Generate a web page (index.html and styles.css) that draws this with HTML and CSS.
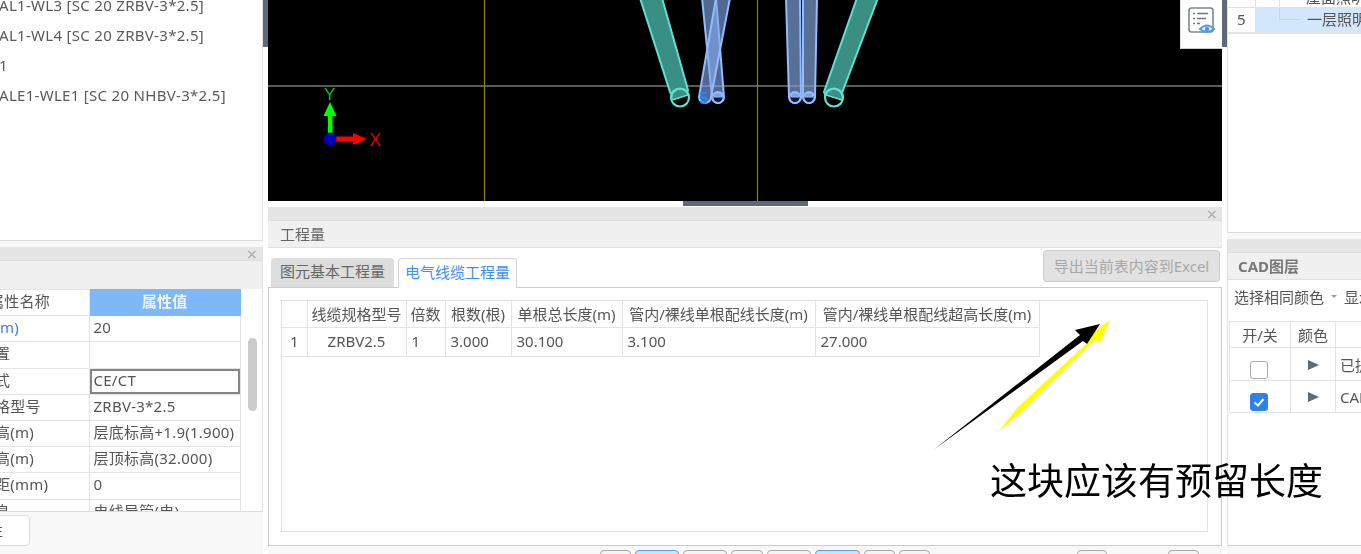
FILE: index.html
```html
<!DOCTYPE html>
<html lang="zh">
<head>
<meta charset="utf-8">
<title>工程量</title>
<link rel="stylesheet" href="styles.css">
</head>
<body>
<div class="app">
  <section class="col col-left">
    <div class="tree">
      <div class="tree-row">AL1-WL3 [SC 20 ZRBV-3*2.5]</div>
      <div class="tree-row">AL1-WL4 [SC 20 ZRBV-3*2.5]</div>
      <div class="tree-row">1</div>
      <div class="tree-row">ALE1-WLE1 [SC 20 NHBV-3*2.5]</div>
    </div>
    <div class="props">
      <div class="strip"><span class="close">×</span></div>
      <div class="title-bar"></div>
      <div class="props-body">
        <table class="grid props-table">
          <colgroup><col class="c-name"><col class="c-value"></colgroup>
          <tr class="props-head"><th class="name-head">属性名称</th><th class="value-head">属性值</th></tr>
          <tr><td class="name flush link">m)</td><td>20</td></tr>
          <tr><td class="name">置</td><td></td></tr>
          <tr><td class="name">式</td><td class="focus">CE/CT</td></tr>
          <tr><td class="name">格型号</td><td>ZRBV-3*2.5</td></tr>
          <tr><td class="name">高(m)</td><td>层底标高+1.9(1.900)</td></tr>
          <tr><td class="name">高(m)</td><td>层顶标高(32.000)</td></tr>
          <tr><td class="name">距(mm)</td><td>0</td></tr>
          <tr><td class="name">息</td><td>电线导管(电)</td></tr>
        </table>
        <div class="vscroll"><div class="vthumb"></div></div>
      </div>
    </div>
    <div class="left-foot"><div class="foot-btn">性</div></div>
  </section>

  <div class="sash"><div class="sash-thumb"></div></div>

  <section class="col col-center">
    <div class="viewer">
      <svg class="scene" viewBox="0 0 954 201" width="954" height="201" aria-hidden="true">
        <g transform="translate(-268 0)">
          <line x1="268" y1="86" x2="1222" y2="86" class="axis-h"/>
          <line x1="484.5" y1="0" x2="484.5" y2="201" class="axis-v"/>
          <line x1="757.5" y1="0" x2="757.5" y2="201" class="axis-v"/>
          <path class="teal" d="M640 -2 L670 92 A9.5 9.5 0 0 0 688 90 L662 -2 Z"/>
          <circle class="teal-end" cx="680" cy="97.5" r="9"/>
          <path class="teal-cap" d="M672 100 A8 8 0 0 1 688 95 Z"/>
          <path class="teal" d="M857 -2 L824 92 A9.5 9.5 0 0 0 842 93 L878 -2 Z"/>
          <circle class="teal-end" cx="834" cy="97.5" r="9"/>
          <path class="teal-cap" d="M826 95 A8 8 0 0 1 842 100 Z"/>
          <path class="blue" d="M702 -2 L712 97 A6 6 0 0 0 724 97 L716 -2 Z"/>
          <path class="blue" d="M716 -2 L699 97 A6 6 0 0 0 711 97 L730 -2 Z"/>
          <path class="blue dark" d="M786 -2 L789 97 A6 6 0 0 0 801 97 L800 -2 Z"/>
          <path class="blue dark" d="M803 -2 L803 97 A6 6 0 0 0 815 97 L817 -2 Z"/>
          <circle class="blue-end" cx="718" cy="97.5" r="5.5"/>
          <circle class="blue-end" cx="795" cy="97.5" r="5.5"/>
          <circle class="blue-end" cx="809" cy="97.5" r="5.5"/>
          <path class="blue-cap" d="M714 97 A4 4 0 0 1 722 97 Z M791 97 A4 4 0 0 1 799 97 Z M805 97 A4 4 0 0 1 813 97 Z"/>
          <text x="699" y="104" class="pipe-label">5</text>
          <path class="y-axis" d="M328 135 V116 H323.5 L330 102 L336.5 116 H332.5 V135 Z"/>
          <path class="x-axis" d="M336 136.5 H353 V133 L367 139 L353 145 V141.5 H336 Z"/>
          <circle class="origin" cx="330" cy="139" r="6.5"/>
          <text x="324" y="100" class="y-label">Y</text>
          <text x="369.5" y="146" class="x-label">X</text>
        </g>
      </svg>
      <div class="float-tool">
        <svg width="28" height="27" viewBox="0 0 28 27" aria-hidden="true">
          <rect x="1" y="1" width="24" height="24" rx="2.5" class="ico-frame"/>
          <path d="M5 6.5 H7 M9 6.5 H20 M5 11.5 H7 M9 11.5 H18 M5 16.5 H7 M9 16.5 H12" class="ico-lines"/>
          <path d="M12 22 Q19 15 26 22 Q19 28 12 22 Z" class="ico-eye"/>
          <circle cx="19" cy="22" r="2.2" class="ico-pupil"/>
        </svg>
      </div>
    </div>
    <div class="splitter"><div class="split-handle"></div></div>
    <div class="strip"><span class="close">×</span></div>
    <div class="title-bar">工程量</div>
    <div class="tabs">
      <div class="tab">图元基本工程量</div>
      <div class="tab active">电气线缆工程量</div>
      <div class="export">导出当前表内容到Excel</div>
    </div>
    <div class="tab-body">
      <div class="qty-box">
        <table class="grid qty-table">
          <colgroup>
            <col class="q1"><col class="q2"><col class="q3"><col class="q4"><col class="q5"><col class="q6"><col class="q7">
          </colgroup>
          <tr class="qty-head"><th></th><th>线缆规格型号</th><th>倍数</th><th>根数(根)</th><th>单根总长度(m)</th><th>管内/裸线单根配线长度(m)</th><th>管内/裸线单根配线超高长度(m)</th></tr>
          <tr class="qty-row"><td class="center">1</td><td class="center">ZRBV2.5</td><td>1</td><td>3.000</td><td>30.100</td><td>3.100</td><td>27.000</td></tr>
        </table>
      </div>
    </div>
    <div class="statusbar">
      <span class="sb w31"></span><span class="sb w44 on"></span><span class="sb w44"></span><span class="sb w32"></span><span class="sb w44"></span><span class="sb w45 on"></span><span class="sb w31"></span><span class="sb w31"></span>
      <span class="sb w30 push"></span><span class="sb-dot"></span><span class="sb w31"></span>
    </div>
  </section>

  <div class="sash"><div class="sash-thumb"></div></div>

  <section class="col col-right">
    <div class="top-list">
      <div class="list-row cut"><span class="l-num"></span><span class="l-tree"></span><span class="l-text">屋面照明</span></div>
      <div class="list-row sel"><span class="l-num">5</span><span class="l-sel"><span class="elbow"></span><span class="l-label">一层照明</span></span></div>
    </div>
    <div class="cad">
      <div class="strip"></div>
      <div class="title-bar cad-title">CAD图层</div>
      <div class="cad-tools"><span>选择相同颜色</span><span class="caret"></span><span>显示</span></div>
      <table class="grid cad-table">
        <colgroup><col class="k1"><col class="k2"><col class="k3"></colgroup>
        <tr class="cad-head"><th>开/关</th><th>颜色</th><th></th></tr>
        <tr class="cad-row"><td><span class="check"></span></td><td><span class="tri"></span></td><td>已提取</td></tr>
        <tr class="cad-row"><td><span class="check on">
          <svg width="18" height="18" viewBox="0 0 18 18" aria-hidden="true"><path d="M4.5 9.5 L8 12.5 L13.5 6" class="tick"/></svg>
        </span></td><td><span class="tri"></span></td><td>CAD</td></tr>
      </table>
    </div>
  </section>
</div>

<div class="note">
  <svg class="arrows" width="1361" height="554" viewBox="0 0 1361 554" aria-hidden="true">
    <path class="arrow-y" d="M998 432 L1017 408 L1086 344 L1088 336 L1110 320 L1100 343 L1095 340 L1024 410 Z"/>
    <path class="arrow-k" d="M934 449.5 L1080 335 L1075 330 L1100 324 L1087 344 L1083 341 Z"/>
  </svg>
  <div class="note-text">这块应该有预留长度</div>
</div>
</body>
</html>
```
FILE: styles.css
```css
* { box-sizing: border-box; }
html, body { margin: 0; padding: 0; }
body {
  width: 1361px;
  height: 554px;
  overflow: hidden;
  position: relative;
  background: #f8f8f8;
  color: #555;
  font-family: "Noto Sans", "Noto Sans CJK SC", sans-serif;
  font-size: 15px;
  line-height: 20px;
}
.app {
  display: grid;
  grid-template-columns: 263px 5px 954px 5px 134px;
  height: 554px;
  filter: blur(0.45px);
}
.col { display: flex; flex-direction: column; height: 554px; overflow: hidden; min-width: 0; }

.sash { background: #fff; }
.sash-thumb { height: 47px; background: #5f6a78; }

.strip {
  height: 14px;
  flex: none;
  background: #e5e5e5;
  display: flex;
  justify-content: flex-end;
  align-items: center;
  padding-right: 5px;
  border-bottom: 1px solid #dcdcdc;
}
.close { color: #aaa; font-size: 18px; line-height: 14px; }
.title-bar {
  height: 27px;
  flex: none;
  background: #f0f0f0;
  border-bottom: 1px solid #e0e0e0;
  padding-left: 12px;
  line-height: 26px;
  color: #666;
}

/* left */
.tree {
  height: 241px;
  flex: none;
  background: #fff;
  border-right: 1px solid #e2e2e2;
  border-bottom: 1px solid #ddd;
}
.tree-row { height: 30px; line-height: 10px; white-space: nowrap; margin-left: -1px; color: #5a5a5a; letter-spacing: .3px; }
.props {
  margin-top: 6px;
  height: 265px;
  flex: none;
  display: flex;
  flex-direction: column;
  border-right: 1px solid #e2e2e2;
  border-bottom: 1px solid #ddd;
  background: #fff;
}
.props .title-bar { height: 28px; border-bottom: 0; }
.props-body { position: relative; flex: 1; overflow: hidden; }
.grid { border-collapse: collapse; table-layout: fixed; background: #fff; }
.grid th, .grid td {
  border: 1px solid #e4e4e4;
  padding: 0 0 0 4px;
  font-weight: 400;
  white-space: nowrap;
  overflow: hidden;
  text-align: left;
}
.props-table { width: 241px; letter-spacing: .25px; }
.c-name { width: 89px; }
.props-table tr { height: 26.2px; }
.props-table td, .props-table th { border-left: 0; padding-bottom: 3px; }
.props-table .name { padding-left: 0; text-indent: -5px; color: #555; }
.props-table .name.flush { text-indent: 0; }
.props-table .name.link { color: #3a7ee8; }
.name-head { padding-left: 0 !important; text-indent: -11px; color: #555; }
.props-table th.value-head {
  background: #7fb8f7;
  color: #eef5ff;
  text-align: center;
  font-weight: 700;
  padding-left: 0;
  border-color: #7fb8f7;
}
.props-table td.focus { box-shadow: inset 0 0 0 2px #858585; }
.vscroll { position: absolute; top: 49px; left: 248px; width: 9px; height: 73px; }
.vthumb { height: 100%; background: #cbcbcb; border-radius: 5px; }
.left-foot { flex: 1; padding-top: 3px; }
.foot-btn {
  width: 35px;
  height: 31px;
  margin-left: -5px;
  background: #fff;
  border: 1px solid #ddd;
  border-radius: 4px;
  line-height: 28px;
  text-indent: -8px;
  overflow: hidden;
}

/* viewer */
.col-center { background: #fff; }
.viewer { position: relative; height: 201px; flex: none; background: #000; }
.scene { display: block; }
.axis-h { stroke: #777; stroke-width: 1.4; }
.axis-v { stroke: #8a8600; stroke-width: 1.2; }
.teal { fill: #3a8f85; stroke: #5fe0d0; stroke-width: 2; }
.teal-end { fill: #000; stroke: #5fe0d0; stroke-width: 2.2; }
.teal-cap { fill: #3a8f85; stroke: #5fe0d0; stroke-width: 1.4; }
.blue { fill: rgba(130, 170, 235, .62); stroke: #93bbff; stroke-width: 2; }
.blue.dark { fill: rgba(120, 155, 205, .72); }
.blue-end { fill: #10182a; stroke: #93bbff; stroke-width: 2; }
.blue-cap { fill: #7f9fd8; stroke: #93bbff; stroke-width: 1; }
.pipe-label { fill: #1f8cff; font-size: 16px; font-weight: 700; font-family: "Liberation Sans", sans-serif; }
.y-axis { fill: #00ff00; }
.x-axis { fill: #ff0000; }
.origin { fill: #0000b4; }
.y-label { fill: #00c800; font-size: 17px; font-family: "Liberation Sans", sans-serif; }
.x-label { fill: #e00000; font-size: 18px; font-family: "Liberation Sans", sans-serif; }
.float-tool {
  position: absolute;
  top: 0;
  right: 0;
  width: 42px;
  height: 49px;
  background: #fff;
  border-left: 1px solid #e4e4e4;
  border-bottom: 1px solid #ccc;
  padding: 7px 0 0 7px;
}
.float-tool svg { display: block; }
.ico-frame { fill: none; stroke: #7c8794; stroke-width: 1.6; }
.ico-lines { fill: none; stroke: #6d7885; stroke-width: 1.3; }
.ico-eye { fill: #fff; stroke: #4f9bec; stroke-width: 2; }
.ico-pupil { fill: #4a96ea; }

.splitter { height: 6px; flex: none; background: #fff; display: flex; justify-content: center; }
.split-handle { width: 125px; height: 5px; background: #5f6a78; }
.tabs {
  height: 39px;
  flex: none;
  display: flex;
  align-items: flex-end;
  gap: 4px;
  padding-left: 3px;
  padding-right: 2px;
  position: relative;
}
.tab {
  height: 29px;
  line-height: 27px;
  width: 123px;
  text-align: center;
  background: #ddd;
  border-radius: 4px 4px 0 0;
  color: #666;
}
.tab.active {
  width: 119px;
  height: 30px;
  background: #fff;
  border: 1px solid #d4d4d4;
  border-bottom: 0;
  margin-bottom: -1px;
  color: #3d8ff0;
  position: relative;
}
.export {
  margin-left: auto;
  align-self: flex-start;
  margin-top: 2px;
  width: 177px;
  height: 32px;
  line-height: 30px;
  text-align: center;
  white-space: nowrap;
  background: #e2e2e2;
  border: 1px solid #ccc;
  border-radius: 4px;
  color: #a8a8a8;
}
.tab-body {
  height: 259px;
  flex: none;
  border: 1px solid #ccc;
  padding: 12px 13px 13px 12px;
  background: #fff;
}
.qty-box { height: 100%; border: 1px solid #e2e2e2; }
.qty-table { width: 757px; }
.q1 { width: 25px; } .q2 { width: 99px; } .q3 { width: 39px; } .q4 { width: 66px; }
.q5 { width: 111px; } .q6 { width: 193px; } .q7 { width: 224px; }
.qty-table tr th, .qty-table tr td { border-top: 0; padding-left: 5px; }
.qty-table tr td { padding-bottom: 2px; }
.qty-table tr > :first-child { border-left: 0; }
.qty-head { height: 26px; }
.qty-row { height: 29px; }
.qty-table .center { text-align: center; padding-left: 0; }
.qty-head th { text-align: center; padding-left: 0 !important; }
.statusbar {
  flex: 1;
  background: #f8f8f8;
  display: flex;
  gap: 4px;
  padding: 4px 23px 0 332px;
}
.sb { height: 14px; flex: none; background: #f4f4f4; border: 1px solid #aaa; border-radius: 4px; }
.sb.on { background: #cfe4fb; border-color: #5aa0ec; }
.w30 { width: 30px; } .w31 { width: 31px; } .w32 { width: 32px; } .w44 { width: 44px; } .w45 { width: 45px; }
.push { margin-left: auto; }
.sb-dot { width: 53px; flex: none; }

/* right */
.col-right { background: #f8f8f8; }
.top-list {
  height: 233px;
  flex: none;
  background: #fff;
  border-left: 1px solid #e2e2e2;
  border-bottom: 1px solid #ddd;
}
.list-row { display: flex; white-space: nowrap; overflow: hidden; }
.list-row.cut { height: 7px; line-height: 0; }
.list-row.sel { height: 27px; border-top: 1px solid #e2e2e2; border-bottom: 2px solid #e2e2e2; line-height: 23px; }
.l-num { width: 28px; flex: none; padding-left: 9px; border-right: 1px solid #e2e2e2; }
.l-tree { width: 24px; flex: none; border-right: 1px solid #e2e2e2; }
.l-text { padding-left: 26px; margin-top: -3px; }
.l-sel { flex: 1; display: flex; background: #d2e6fc; }
.elbow {
  width: 20px;
  height: 12px;
  margin-left: 23px;
  flex: none;
  border-left: 1px solid #c8d6e6;
  border-bottom: 1px solid #c8d6e6;
}
.l-label { padding-left: 8px; }
.cad {
  margin-top: 6px;
  flex: 1;
  display: flex;
  flex-direction: column;
  background: #fff;
  border-left: 1px solid #e2e2e2;
  max-height: 307px;
  border-bottom: 1px solid #ccc;
}
.cad-title { font-weight: 700; padding-left: 10px; color: #777; }
.cad-tools {
  height: 33px;
  flex: none;
  display: flex;
  align-items: center;
  padding-left: 6px;
  white-space: nowrap;
  margin-bottom: 8px;
}
.caret {
  width: 0;
  height: 0;
  margin: 0 7px 0 7px;
  border: 3px solid transparent;
  border-top: 3px solid #999;
  border-bottom: 0;
  flex: none;
}
.cad-table { width: 190px; margin-left: 1px; flex: none; }
.k1 { width: 61px; } .k2 { width: 45px; }
.cad-table th, .cad-table td { text-align: center; padding-left: 0; }
.cad-table td:last-child { text-align: left; padding: 2px 0 0 4px; }
.cad-head { height: 26px; }
.cad-row { height: 32.5px; }
.check {
  display: inline-block;
  width: 18px;
  height: 18px;
  margin: 12px 2px 0 0;
  border: 1.5px solid #aaa;
  border-radius: 3px;
  background: #fff;
  vertical-align: middle;
}
.check.on { background: #2f80e8; border-color: #2f80e8; }
.check svg { display: block; margin: -1.5px; }
.tick { fill: none; stroke: #fff; stroke-width: 2; }
.tri {
  display: inline-block;
  width: 0;
  height: 0;
  margin-top: 2px;
  border-left: 11px solid #5f6a7a;
  border-top: 5.5px solid transparent;
  border-bottom: 5.5px solid transparent;
}

/* annotation drawn over the screenshot */
.note { position: absolute; inset: 0; pointer-events: none; }
.arrows { position: absolute; inset: 0; display: block; }
.arrow-k { fill: #000; }
.arrow-y { fill: #ffff00; }
.note-text {
  position: absolute;
  left: 990px;
  top: 454px;
  font-size: 37px;
  line-height: 54px;
  color: #000;
  white-space: nowrap;
}
```
